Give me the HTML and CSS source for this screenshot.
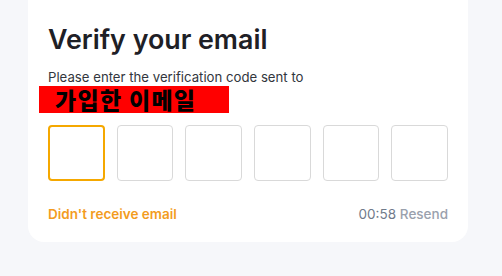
FILE: index.html
```html
<!DOCTYPE html>
<html>
<head>
<meta charset="utf-8">
<link rel="stylesheet" href="styles.css">
</head>
<body>
<div class="card">
  <h1 class="title">Verify your email</h1>
  <p class="subtitle">Please enter the verification code sent to</p>
  <div class="email"><span>가입한 이메일</span></div>
  <div class="codes">
    <div class="code active"></div>
    <div class="code"></div>
    <div class="code"></div>
    <div class="code"></div>
    <div class="code"></div>
    <div class="code"></div>
  </div>
  <div class="footer">
    <span class="help">Didn't receive email</span>
    <span class="timer">00:58 <span class="resend">Resend</span></span>
  </div>
</div>
</body>
</html>
```

FILE: styles.css
```css
html, body {
  margin: 0;
  padding: 0;
  background: #f6f7fa;
  font-family: "Inter", "Liberation Sans", sans-serif;
}
body {
  width: 502px;
  height: 276px;
  overflow: hidden;
}
.card {
  margin: -20px 0 0 28px;
  width: 440px;
  box-sizing: border-box;
  padding: 43px 20px 20px 20px;
  background: #ffffff;
  border-radius: 16px;
}
.title {
  margin: 0;
  font-size: 26.8px;
  line-height: 32px;
  font-weight: 600;
  color: #1e2026;
}
.subtitle {
  margin: 14px 0 0 0;
  font-size: 13.2px;
  line-height: 16px;
  color: #32363d;
}
.email {
  margin: 1px 0 0 -9px;
  width: 190px;
  height: 27px;
  background: #ff0000;
  display: flex;
  align-items: center;
  padding-left: 16px;
  box-sizing: border-box;
}
.email span {
  font-family: "Noto Sans CJK KR", sans-serif;
  font-weight: 900;
  font-size: 23px;
  line-height: 27px;
  letter-spacing: 1.3px;
  color: #000000;
  white-space: nowrap;
}
.codes {
  margin-top: 12px;
  display: grid;
  grid-template-columns: repeat(6, 1fr);
  gap: 12px;
}
.code {
  height: 56px;
  border: 1px solid #d9d9d9;
  border-radius: 4px;
  box-sizing: border-box;
}
.code.active {
  border: 2px solid #f5a800;
}
.footer {
  margin-top: 25px;
  display: flex;
  justify-content: space-between;
  align-items: center;
  font-size: 13.5px;
  line-height: 16px;
}
.help {
  color: #f39c1e;
  font-weight: 600;
}
.timer {
  color: #707a8a;
}
.resend {
  color: #9aa1ad;
  font-weight: 500;
}
```
